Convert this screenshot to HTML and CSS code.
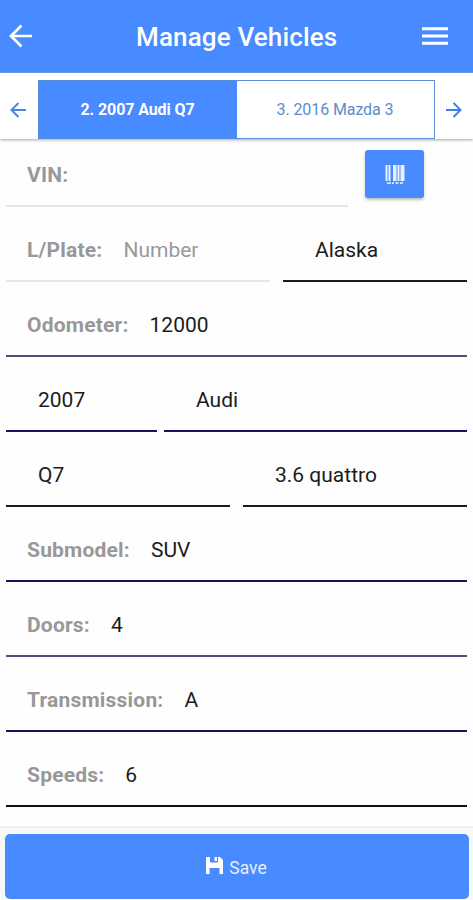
FILE: index.html
```html
<!DOCTYPE html>
<html lang="en">
<head>
    <meta charset="utf-8">
    <title>Manage Vehicles</title>
    <link rel="stylesheet" href="styles.css">
</head>
<body>
    <header class="header">
        <svg class="back" viewBox="0 0 24 24" width="24" height="24"><path d="M23 12H2M12.500 1.500L2 12l10.500 10.500" fill="none" stroke="#fff" stroke-width="2.7"/></svg>
        <h1>Manage Vehicles</h1>
        <svg class="menu" viewBox="0 0 26 18" width="26" height="18"><path d="M0 1.7h26M0 9h26M0 16.3h26" stroke="#fff" stroke-width="3"/></svg>
    </header>

    <nav class="tabs">
        <svg class="arrow" viewBox="0 0 16 16" width="16" height="16"><path d="M16 8H1.5M8.5 1l-7 7 7 7" fill="none" stroke="#4d88dc" stroke-width="2"/></svg>
        <div class="segment">
            <div class="tab active">2. 2007 Audi Q7</div>
            <div class="tab">3. 2016 Mazda 3</div>
        </div>
        <svg class="arrow" viewBox="0 0 16 16" width="16" height="16"><path d="M0 8h14.5M7.5 1l7 7-7 7" fill="none" stroke="#3f7fe8" stroke-width="2"/></svg>
    </nav>

    <main class="form">
        <div class="row first">
            <div class="field empty vin"><span class="label">VIN:</span></div>
            <button type="button" class="scan">
                <svg viewBox="0 0 20 20" width="20" height="20">
                    <path d="M.5 0h2v16h-2zM3.5 0h2v16h-2zM8 0h3.500v16H8zM12.500 0h2v16h-2zM15.500 0h4v16h-4z" fill="#e8f2ff"/>
                    <path d="M2 18h4M7 18h2M10.500 18h3M15 18h3" stroke="#c5dcff" stroke-width="2"/>
                </svg>
            </button>
        </div>
        <div class="row plate">
            <div class="field empty"><span class="label">L/Plate:</span><span class="placeholder">Number</span></div>
            <div class="field select state"><span>Alaska</span></div>
        </div>
        <div class="row">
            <div class="field soft"><span class="label">Odometer:</span><span>12000</span></div>
        </div>
        <div class="row make">
            <div class="field select navy"><span>2007</span></div>
            <div class="field select navy"><span>Audi</span></div>
        </div>
        <div class="row model">
            <div class="field select"><span>Q7</span></div>
            <div class="field select"><span>3.6 quattro</span></div>
        </div>
        <div class="row">
            <div class="field navy"><span class="label">Submodel:</span><span>SUV</span></div>
        </div>
        <div class="row">
            <div class="field soft"><span class="label">Doors:</span><span>4</span></div>
        </div>
        <div class="row">
            <div class="field navy"><span class="label">Transmission:</span><span>A</span></div>
        </div>
        <div class="row">
            <div class="field black"><span class="label">Speeds:</span><span>6</span></div>
        </div>
    </main>

    <footer class="footer">
        <button type="button" class="save">
            <svg viewBox="0 0 17 17" width="17" height="17"><path d="M0 0h4v5.500h8V0h2l3 3v14h-3.500v-6h-10v6H0zM8.500 0h2.500v4H8.500z" fill="#fff"/></svg>
            <span>Save</span>
        </button>
    </footer>
</body>
</html>
```
FILE: styles.css
```css
* {
    box-sizing: border-box;
}
body {
    margin: 0;
    height: 900px;
    display: flex;
    flex-direction: column;
    overflow: hidden;
    font-family: Roboto, sans-serif;
    background: #fefefe;
    color: #1c1c1c;
}
svg {
    display: block;
    flex: none;
}

.header {
    height: 73px;
    flex: none;
    display: flex;
    align-items: center;
    padding: 0 25px 0 9px;
    background: #488aff;
    border-bottom: 1px solid #6d9ff5;
}
.header h1 {
    margin: 2px 0 0 103px;
    font-size: 26px;
    font-weight: 500;
    letter-spacing: 0.15px;
    color: #fff;
}
.menu {
    margin-left: auto;
}

.tabs {
    height: 66px;
    flex: none;
    display: flex;
    align-items: flex-end;
    justify-content: space-between;
    padding: 0 11px 0 10px;
    background: #fff;
    box-shadow: 0 1px 3px rgba(0, 0, 0, 0.35);
}
.arrow {
    margin-bottom: 21px;
}
.segment {
    display: flex;
    width: 397px;
    height: 59px;
    border: 1px solid #5c8fda;
}
.tab {
    flex: 1;
    display: flex;
    align-items: center;
    justify-content: center;
    font-size: 16px;
    letter-spacing: -0.1px;
    color: #5a8dcd;
}
.active {
    flex: none;
    width: 198px;
    background: #488aff;
    color: #fff;
    font-weight: 700;
}

.form {
    flex: none;
    padding: 0 6px;
    font-size: 21px;
}
.row {
    display: flex;
    height: 75.1px;
}
.first {
    height: 67.5px;
}
.field {
    flex: 1;
    display: flex;
    align-items: center;
    gap: 21px;
    padding: 13px 0 0 21px;
    border-bottom: 2px solid #1d1829;
    white-space: nowrap;
}
.select {
    padding-left: 32px;
}
.label {
    font-weight: 700;
    color: #989898;
    letter-spacing: 0.2px;
}
.placeholder {
    color: #999;
}
.empty {
    border-bottom-color: #e5e5e5;
}
.soft {
    border-bottom-color: #554e78;
}
.navy {
    border-bottom-color: #19145a;
}
.black {
    border-bottom-color: #101012;
}
.vin {
    flex: none;
    width: 342px;
    padding-top: 6px;
}
.scan {
    display: flex;
    align-items: center;
    justify-content: center;
    width: 59px;
    height: 48px;
    margin: 11px 0 0 17px;
    padding: 2px 0 0;
    border: none;
    border-radius: 3px;
    background: #488aff;
    box-shadow: 0 2px 3px rgba(0, 0, 0, 0.25);
}
.plate {
    display: grid;
    grid-template-columns: 264px 184px;
    gap: 13px;
}
.make {
    display: grid;
    grid-template-columns: 151px 303px;
    gap: 7px;
}
.model {
    display: grid;
    grid-template-columns: 224px 224px;
    gap: 13px;
}

.footer {
    flex: none;
    height: 74px;
    margin-top: auto;
    padding: 6px 4px 1px 5px;
    background: #f7f7f7;
    border-top: 2px solid #f0f0f0;
}
.save {
    display: flex;
    align-items: center;
    justify-content: center;
    gap: 6px;
    width: 100%;
    height: 65px;
    padding: 0 1px 0 0;
    border: none;
    border-radius: 5px;
    background: #488aff;
    color: #e4f0ff;
    font-family: inherit;
    font-size: 17.5px;
}
.save span {
    margin-top: 2px;
}
.save svg {
    margin-bottom: 2px;
}
```
